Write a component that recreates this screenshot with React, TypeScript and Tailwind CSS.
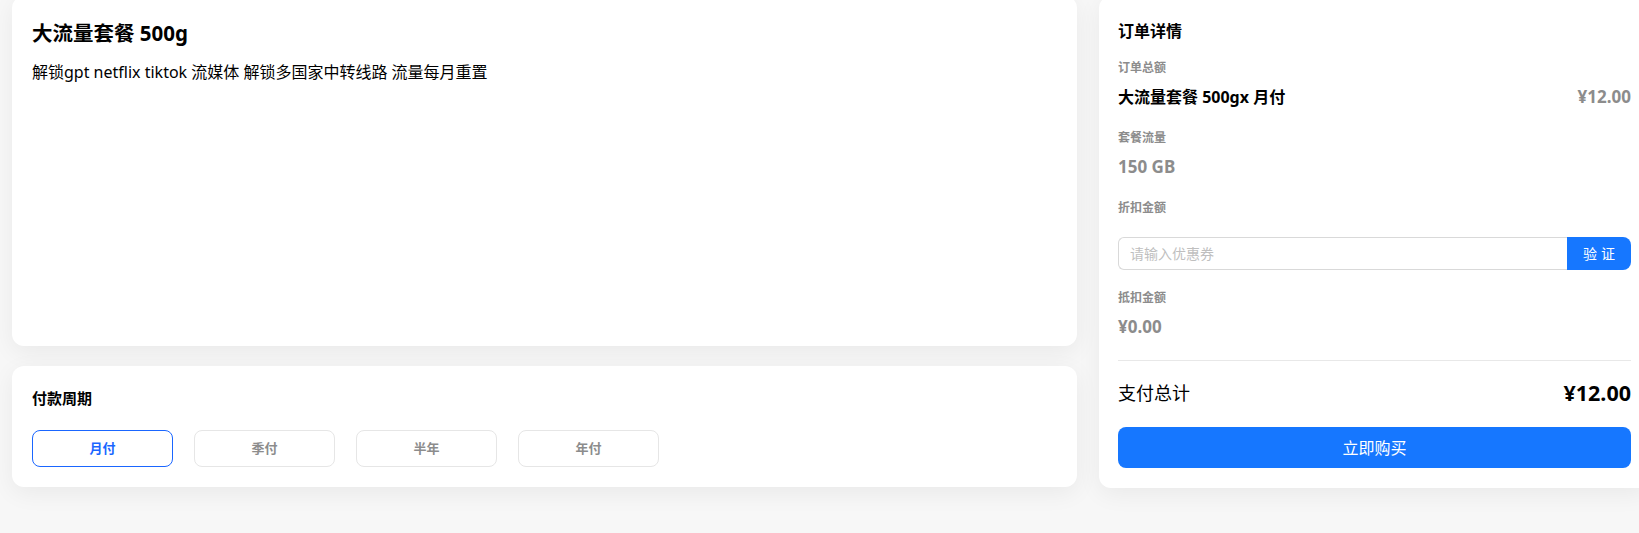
import React, { FC } from 'react'

const periods = ['月付', '季付', '半年', '年付']

type RowProps = { label: string; children: React.ReactNode; className?: string }

const Field: FC<RowProps> = ({ label, children, className = '' }) => (
  <div className={className}>
    <div className='text-[12px] leading-[18px] font-bold text-[#8c8c8c]'>{label}</div>
    {children}
  </div>
)

const App: FC = () => {
  return (
    <div className="w-screen h-[533px] overflow-hidden bg-[#f7f7f7] font-['Noto_Sans','Noto_Sans_CJK_SC',sans-serif] text-black">
      <div className='flex w-[1650px] gap-[22px] pl-3 -mt-1 items-start'>
        {/* left column */}
        <div className='w-[1065px] shrink-0 flex flex-col gap-5'>
          <div className='h-[350px] bg-white rounded-xl shadow-[0_6px_24px_rgba(0,0,0,0.06)] px-5 pt-[23px]'>
            <h1 className='text-[20.5px] leading-[28px] font-bold'>大流量套餐 500g</h1>
            <p className='mt-[13px] text-[16px] leading-[24px]'>解锁gpt netflix tiktok 流媒体 解锁多国家中转线路 流量每月重置</p>
          </div>

          <div className='bg-white rounded-xl shadow-[0_6px_24px_rgba(0,0,0,0.06)] px-5 pt-[21px] pb-5'>
            <div className='text-[15px] leading-[22px] font-bold'>付款周期</div>
            <div className='mt-[21px] flex gap-[21px]'>
              {periods.map((p, i) => (
                <button
                  key={p}
                  className={`w-[141px] h-[37px] rounded-lg border text-[13px] font-bold ${i === 0 ? 'border-[#1a66ff] text-[#1a66ff]' : 'border-[#e6e6e6] text-[#8c8c8c]'}`}
                >
                  {p}
                </button>
              ))}
            </div>
          </div>
        </div>

        {/* order details */}
        <div className='w-[551px] shrink-0 h-[492px] bg-white rounded-xl shadow-[0_6px_24px_rgba(0,0,0,0.06)] px-[19px] pt-[23px]'>
          <div className='text-[16px] leading-[24px] font-bold'>订单详情</div>

          <Field label='订单总额' className='mt-4'>
            <div className='mt-2 flex justify-between items-center leading-[24px] font-bold'>
              <span className='text-[16px]'>大流量套餐 500gx 月付</span>
              <span className='text-[17px] text-[#8c8c8c]'>¥12.00</span>
            </div>
          </Field>

          <Field label='套餐流量' className='mt-5'>
            <div className='mt-2 text-[17px] leading-[24px] font-bold text-[#8c8c8c]'>150 GB</div>
          </Field>

          <Field label='折扣金额' className='mt-5'>
            <div className='mt-5 flex h-[33px]'>
              <input
                placeholder='请输入优惠券'
                className='flex-1 min-w-0 border border-[#d9d9d9] border-r-0 rounded-l-md px-[11px] text-[14px] outline-none placeholder:text-[#bfbfbf]'
              />
              <button className='w-[64px] bg-[#1677ff] text-white text-[14px] tracking-[4px] pl-1 rounded-r-lg'>验证</button>
            </div>
          </Field>

          <Field label='抵扣金额' className='mt-[19px]'>
            <div className='mt-2 text-[17px] leading-[24px] font-bold text-[#8c8c8c]'>¥0.00</div>
          </Field>

          <div className='mt-[21px] border-t border-[#e8e8e8]' />

          <div className='mt-[18px] flex justify-between items-center leading-[28px]'>
            <span className='text-[18px]'>支付总计</span>
            <span className='text-[21.5px] font-bold'>¥12.00</span>
          </div>

          <button className='mt-5 w-full h-[41px] rounded-lg bg-[#1677ff] text-white text-[16px]'>立即购买</button>
        </div>
      </div>
    </div>
  )
}

export default App
